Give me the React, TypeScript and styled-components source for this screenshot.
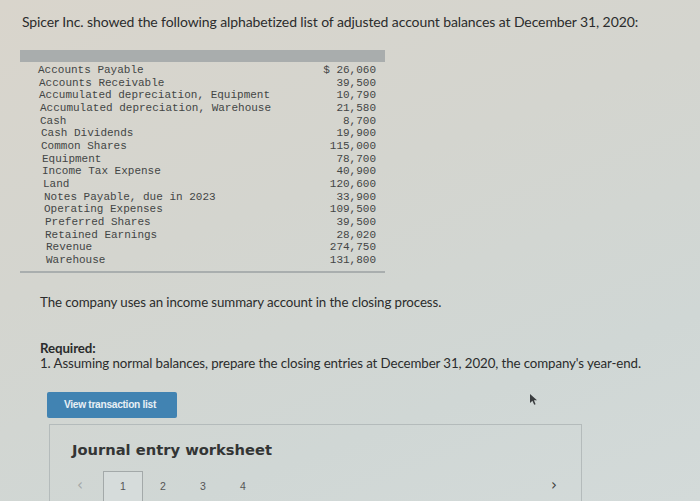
import React from 'react';
import styled, { createGlobalStyle } from 'styled-components';

const GlobalStyle = createGlobalStyle`
  html, body {
    margin: 0;
    padding: 0;
    background: #d3d4cf;
  }
`;

const accounts: [string, string][] = [
  ['Accounts Payable', '$ 26,060'],
  ['Accounts Receivable', '39,500'],
  ['Accumulated depreciation, Equipment', '10,790'],
  ['Accumulated depreciation, Warehouse', '21,580'],
  ['Cash', '8,700'],
  ['Cash Dividends', '19,900'],
  ['Common Shares', '115,000'],
  ['Equipment', '78,700'],
  ['Income Tax Expense', '40,900'],
  ['Land', '120,600'],
  ['Notes Payable, due in 2023', '33,900'],
  ['Operating Expenses', '109,500'],
  ['Preferred Shares', '39,500'],
  ['Retained Earnings', '28,020'],
  ['Revenue', '274,750'],
  ['Warehouse', '131,800'],
];

const Page = styled.div`
  position: relative;
  box-sizing: border-box;
  width: 700px;
  height: 501px;
  overflow: hidden;
  padding: 13px 0 0 22px;
  background: linear-gradient(160deg, #d9d5cc 0%, #d4d5cf 40%, #d0d7d5 75%, #d3dad9 100%);
  font-family: Lato, 'Open Sans', sans-serif;
  color: #2b2c2c;
`;

const Title = styled.p`
  margin: 0;
  font-size: 14px;
  line-height: 18px;
  letter-spacing: -0.1px;
`;

const Table = styled.div`
  width: 365px;
  margin: 19px 0 0 -2px;
  border-bottom: 2px solid #a9aeae;
`;

const HeaderBar = styled.div`
  height: 12px;
  background: #a9adad;
`;

const Rows = styled.div`
  padding: 2px 9px 4px 18px;
  font-family: 'Liberation Mono', 'DejaVu Sans Mono', monospace;
  font-size: 11px;
  line-height: 12.67px;
  color: #434545;
`;

const Row = styled.div<{ $shift: number }>`
  display: flex;
  justify-content: space-between;
  padding-left: ${({ $shift }) => $shift}px;
  white-space: pre;
`;

const Text = styled.p<{ $top: number }>`
  margin: ${({ $top }) => $top}px 0 0 18px;
  font-size: 13.3px;
  line-height: 15px;
  letter-spacing: -0.1px;
`;

const Strong = styled.span`
  font-weight: 700;
`;

const Button = styled.button`
  display: block;
  width: 130px;
  height: 26px;
  margin: 21px 0 0 25px;
  padding: 0 0 0 17px;
  border: none;
  border-radius: 2px;
  background: #4183b2;
  color: #e8f0f5;
  font-family: 'Liberation Sans', Arial, sans-serif;
  font-size: 10.2px;
  font-weight: 700;
  text-align: left;
  letter-spacing: -0.3px;
`;

const Worksheet = styled.div`
  box-sizing: border-box;
  width: 533px;
  height: 120px;
  margin: 6px 0 0 27px;
  padding: 15px 0 0 22px;
  border: 1px solid #b4bbbb;
  border-bottom: none;
`;

const WorksheetTitle = styled.h3`
  margin: 0;
  font-family: 'DejaVu Sans', Verdana, sans-serif;
  font-size: 14.7px;
  line-height: 20px;
  font-weight: 700;
  color: #333535;
`;

const Pager = styled.div`
  display: flex;
  align-items: stretch;
  height: 40px;
  margin-top: 11px;
  padding-right: 19px;
  font-family: 'Liberation Sans', Arial, sans-serif;
  font-size: 10.5px;
  color: #555;
`;

const Arrow = styled.span<{ $push?: boolean }>`
  display: flex;
  align-items: center;
  justify-content: center;
  width: 16px;
  padding-bottom: 11px;
  margin-left: ${({ $push }) => ($push ? 'auto' : '0')};
  color: ${({ $push }) => ($push ? '#3d4040' : '#a4a8a8')};
  font-size: 15px;
  font-family: 'DejaVu Sans', sans-serif;
`;

const Tab = styled.span<{ $active?: boolean }>`
  display: flex;
  align-items: flex-start;
  justify-content: center;
  box-sizing: border-box;
  width: 40px;
  padding-top: 8px;
  margin-left: ${({ $active }) => ($active ? '15px' : '0')};
  border: 1px solid ${({ $active }) => ($active ? '#a3a9a9' : 'transparent')};
  border-bottom: none;
  background: ${({ $active }) => ($active ? '#d6dcdb' : 'transparent')};
`;

const Cursor = styled.svg`
  position: absolute;
  left: 529px;
  top: 393px;
`;

const App: React.FC = () => (
  <>
    <GlobalStyle />
    <Page>
      <Title>
        Spicer Inc. showed the following alphabetized list of adjusted account balances at December 31, 2020:
      </Title>
      <Table>
        <HeaderBar />
        <Rows>
          {accounts.map(([name, amount], i) => (
            <Row key={name} $shift={Math.round(i * 0.55)}>
              <span>{name}</span>
              <span>{amount}</span>
            </Row>
          ))}
        </Rows>
      </Table>
      <Text $top={22}>The company uses an income summary account in the closing process.</Text>
      <Text $top={31}>
        <Strong>Required:</Strong>
        <br />
        1. Assuming normal balances, prepare the closing entries at December 31, 2020, the company's year-end.
      </Text>
      <Button>View transaction list</Button>
      <Worksheet>
        <WorksheetTitle>Journal entry worksheet</WorksheetTitle>
        <Pager>
          <Arrow>‹</Arrow>
          <Tab $active>1</Tab>
          <Tab>2</Tab>
          <Tab>3</Tab>
          <Tab>4</Tab>
          <Arrow $push>›</Arrow>
        </Pager>
      </Worksheet>
      <Cursor width="9" height="13" viewBox="0 0 9 13">
        <path d="M1 1 L1 10 L3.4 7.8 L5.2 11.8 L6.6 11.2 L4.9 7.3 L8 7.2 Z" fill="#3a3d3f" />
      </Cursor>
    </Page>
  </>
);

export default App;
